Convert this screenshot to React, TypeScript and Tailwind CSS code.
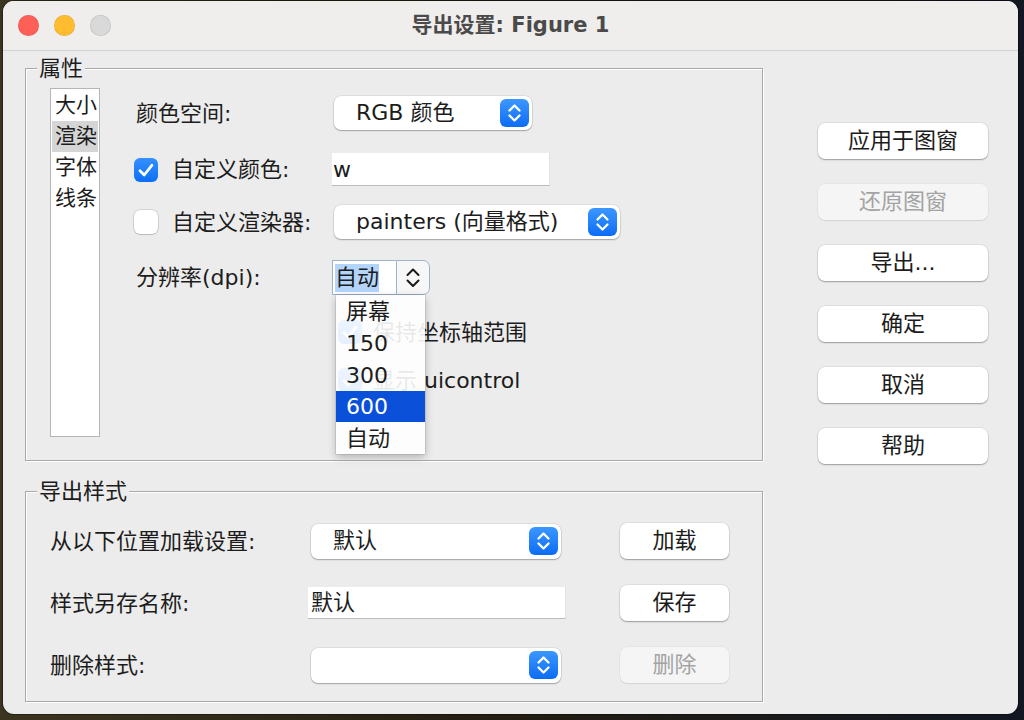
import React from "react";

function Stepper() {
  return (
    <div className="w-[29px] h-[28px] rounded-[6px] bg-linear-to-b from-[#3b97ff] to-[#0a6cf5] flex items-center justify-center shrink-0">
      <svg width="29" height="28" viewBox="0 0 29 28">
        <path d="M9.5 11.5 L14.5 6.5 L19.5 11.5" stroke="white" strokeWidth="2.3" fill="none" strokeLinecap="round" strokeLinejoin="round" />
        <path d="M9.5 16.5 L14.5 21.5 L19.5 16.5" stroke="white" strokeWidth="2.3" fill="none" strokeLinecap="round" strokeLinejoin="round" />
      </svg>
    </div>
  );
}

function Select({ text, w, h = 34 }: { text: string; w: string; h?: number }) {
  return (
    <div
      className={`${w} ${h === 35 ? "h-[35px]" : "h-[34px]"} flex items-center rounded-[7px] bg-white shadow-[0_0_0_0.5px_rgba(0,0,0,0.12),0_1px_1.5px_rgba(0,0,0,0.28)] pl-[22px] pr-[3px]`}
    >
      <span className="leading-none whitespace-nowrap">{text}</span>
      <div className="ml-auto">
        <Stepper />
      </div>
    </div>
  );
}

function Check({ checked }: { checked: boolean }) {
  if (checked)
    return (
      <div className="w-[24px] h-[24px] rounded-[6px] bg-linear-to-b from-[#3391ff] to-[#0a6ef6] flex items-center justify-center shrink-0">
        <svg width="24" height="24" viewBox="0 0 24 24">
          <path d="M6 12.8 L10.2 17 L18 7.2" stroke="white" strokeWidth="2.7" fill="none" strokeLinecap="round" strokeLinejoin="round" />
        </svg>
      </div>
    );
  return (
    <div className="w-[24px] h-[24px] rounded-[6px] bg-white shadow-[0_0_0_0.5px_rgba(0,0,0,0.22),0_1px_1px_rgba(0,0,0,0.12)] shrink-0" />
  );
}

function Btn({ label, disabled, w }: { label: string; disabled?: boolean; w: string }) {
  return (
    <div
      className={`${w} h-[36px] rounded-[7px] flex items-center justify-center leading-none ${
        disabled
          ? "bg-[#f5f5f5] text-[#a3a3a3] shadow-[0_0_0_0.5px_rgba(0,0,0,0.06),0_1px_1px_rgba(0,0,0,0.08)]"
          : "bg-white text-[#1c1c1c] shadow-[0_0_0_0.5px_rgba(0,0,0,0.1),0_1px_1.5px_rgba(0,0,0,0.3)]"
      }`}
    >
      {label}
    </div>
  );
}

function Chevrons() {
  return (
    <svg width="16" height="24" viewBox="0 0 16 24">
      <path d="M2.5 9 L8 3.5 L13.5 9" stroke="#1a1a1a" strokeWidth="2" fill="none" strokeLinecap="round" strokeLinejoin="round" />
      <path d="M2.5 14.5 L8 20 L13.5 14.5" stroke="#1a1a1a" strokeWidth="2" fill="none" strokeLinecap="round" strokeLinejoin="round" />
    </svg>
  );
}

export default function App() {
  return (
    <div className="w-[1024px] h-[720px] overflow-hidden pt-px pl-[3px] bg-linear-to-r from-[#3b3520] via-[#231d12] to-[#121722] font-['DejaVu_Sans','Noto_Sans_CJK_SC',sans-serif] text-[22px] text-[#1c1c1c]">
      <div className="w-[1015px] h-[713px] rounded-[11px] bg-[#ececec] overflow-hidden flex flex-col shadow-[0_0_0_1px_rgba(0,0,0,0.35)]">
        {/* title bar */}
        <div className="relative h-[50px] shrink-0 bg-[#efeeed] border-b border-[#d2d2d2] flex items-center pl-[15px] gap-[15px]">
          <div className="w-[21px] h-[21px] rounded-full bg-[#fe5f57] shadow-[inset_0_0_0_0.5px_rgba(0,0,0,0.12)]" />
          <div className="w-[21px] h-[21px] rounded-full bg-[#febc2e] shadow-[inset_0_0_0_0.5px_rgba(0,0,0,0.12)]" />
          <div className="w-[21px] h-[21px] rounded-full bg-[#d9d9d9] shadow-[inset_0_0_0_0.5px_rgba(0,0,0,0.15)]" />
          <div className="absolute inset-0 flex items-center justify-center font-bold text-[21px] text-[#4a4a4a] pointer-events-none">
            导出设置: Figure 1
          </div>
        </div>

        {/* body */}
        <div className="flex pl-[22px] pt-[17px]">
          <div className="w-[738px] flex flex-col">
            {/* 属性 */}
            <div className="relative h-[393px] border border-[#a9a9a9] shadow-[inset_1px_1px_0_#ffffff,1px_1px_0_#ffffff] flex pl-[24px] pt-[19px]">
              <div className="absolute left-[11px] top-[-12px] px-[2px] bg-[#ececec] leading-[24px]">属性</div>
              <div className="w-[50px] h-[349px] bg-white border border-[#b5b5b5] flex flex-col pt-[1px] leading-[31px] text-[21px] overflow-hidden">
                <div className="pl-[3px] mx-[1px] whitespace-nowrap">大小</div>
                <div className="pl-[3px] mx-[1px] whitespace-nowrap bg-[#d5d5d5]">渲染</div>
                <div className="pl-[3px] mx-[1px] whitespace-nowrap">字体</div>
                <div className="pl-[3px] mx-[1px] whitespace-nowrap">线条</div>
              </div>
              <div className="ml-[34px] flex flex-col">
                <div className="mt-[8px] h-[34px] flex items-center">
                  <div className="w-[198px] pl-[2px]">颜色空间:</div>
                  <div className="ml-[2px]">
                    <Select text="RGB 颜色" w="w-[198px]" />
                  </div>
                </div>
                <div className="mt-[23px] h-[33px] flex items-center">
                  <div className="w-[198px] flex items-center gap-[14px]">
                    <Check checked />
                    <span>自定义颜色:</span>
                  </div>
                  <div className="w-[218px] h-[33px] bg-white border-b border-[#bcbcbc] border-r border-r-[#e2e2e2] flex items-center pl-[1px]">
                    w
                  </div>
                </div>
                <div className="mt-[19px] h-[34px] flex items-center">
                  <div className="w-[198px] flex items-center gap-[14px]">
                    <Check checked={false} />
                    <span className="whitespace-nowrap">自定义渲染器:</span>
                  </div>
                  <div className="ml-[2px]">
                    <Select text="painters (向量格式)" w="w-[286px]" />
                  </div>
                </div>
                <div className="mt-[21px] h-[35px] flex items-center relative z-10">
                  <div className="w-[198px] pl-[2px]">分辨率(dpi):</div>
                  <div className="relative">
                    <div className="w-[98px] h-[35px] flex items-stretch">
                      <div className="flex-1 border border-[#9fb3cf] border-r-0 bg-white flex items-center pl-[2px]">
                        <span className="bg-[#b3d4fb] leading-[28px]">自动</span>
                      </div>
                      <div className="w-[34px] border border-[#9fb3cf] rounded-r-[7px] bg-[#f7f7f7] flex items-center justify-center">
                        <Chevrons />
                      </div>
                    </div>
                    <div className="absolute left-[4px] top-[35px] w-[89px] bg-white/[0.9] shadow-[0_0_0_0.5px_rgba(0,0,0,0.15),0_3px_8px_rgba(0,0,0,0.25)] flex flex-col">
                      <div className="h-[32px] flex items-center pl-[10px]">屏幕</div>
                      <div className="h-[32px] flex items-center pl-[10px]">150</div>
                      <div className="h-[32px] flex items-center pl-[10px]">300</div>
                      <div className="h-[31px] flex items-center pl-[10px] bg-[#0b50d8] text-white">600</div>
                      <div className="h-[32px] flex items-center pl-[10px]">自动</div>
                    </div>
                  </div>
                </div>
                <div className="mt-[21px] h-[32px] flex items-center">
                  <div className="w-[198px]" />
                  <div className="pl-[6px] flex items-center gap-[11px]">
                    <Check checked />
                    <span className="whitespace-nowrap">保持坐标轴范围</span>
                  </div>
                </div>
                <div className="mt-[16px] h-[32px] flex items-center">
                  <div className="w-[198px]" />
                  <div className="pl-[6px] flex items-center gap-[11px]">
                    <Check checked />
                    <span className="whitespace-nowrap">显示 uicontrol</span>
                  </div>
                </div>
              </div>
            </div>

            {/* 导出样式 */}
            <div className="relative mt-[30px] h-[211px] border border-[#a9a9a9] shadow-[inset_1px_1px_0_#ffffff,1px_1px_0_#ffffff] pl-[24px] pt-[18px]">
              <div className="absolute left-[11px] top-[-12px] px-[2px] bg-[#ececec] leading-[24px]">导出样式</div>
              <div className="grid grid-cols-[261px_250px_59px_109px] auto-rows-[62px] items-center">
                <div className="whitespace-nowrap">从以下位置加载设置:</div>
                <Select text="默认" w="w-[250px]" h={35} />
                <div />
                <Btn label="加载" w="w-[109px]" />

                <div className="whitespace-nowrap">样式另存名称:</div>
                <div className="-ml-[3px] w-[258px] h-[32px] bg-white border-b border-[#bcbcbc] border-r border-r-[#e2e2e2] flex items-center pl-[3px]">
                  默认
                </div>
                <div />
                <Btn label="保存" w="w-[109px]" />

                <div className="whitespace-nowrap">删除样式:</div>
                <Select text="" w="w-[250px]" h={35} />
                <div />
                <Btn label="删除" w="w-[109px]" disabled />
              </div>
            </div>
          </div>

          {/* right buttons */}
          <div className="ml-[55px] w-[170px] mt-[55px] flex flex-col gap-[25px]">
            <Btn label="应用于图窗" w="w-[170px]" />
            <Btn label="还原图窗" w="w-[170px]" disabled />
            <Btn label="导出..." w="w-[170px]" />
            <Btn label="确定" w="w-[170px]" />
            <Btn label="取消" w="w-[170px]" />
            <Btn label="帮助" w="w-[170px]" />
          </div>
        </div>
      </div>
    </div>
  );
}
